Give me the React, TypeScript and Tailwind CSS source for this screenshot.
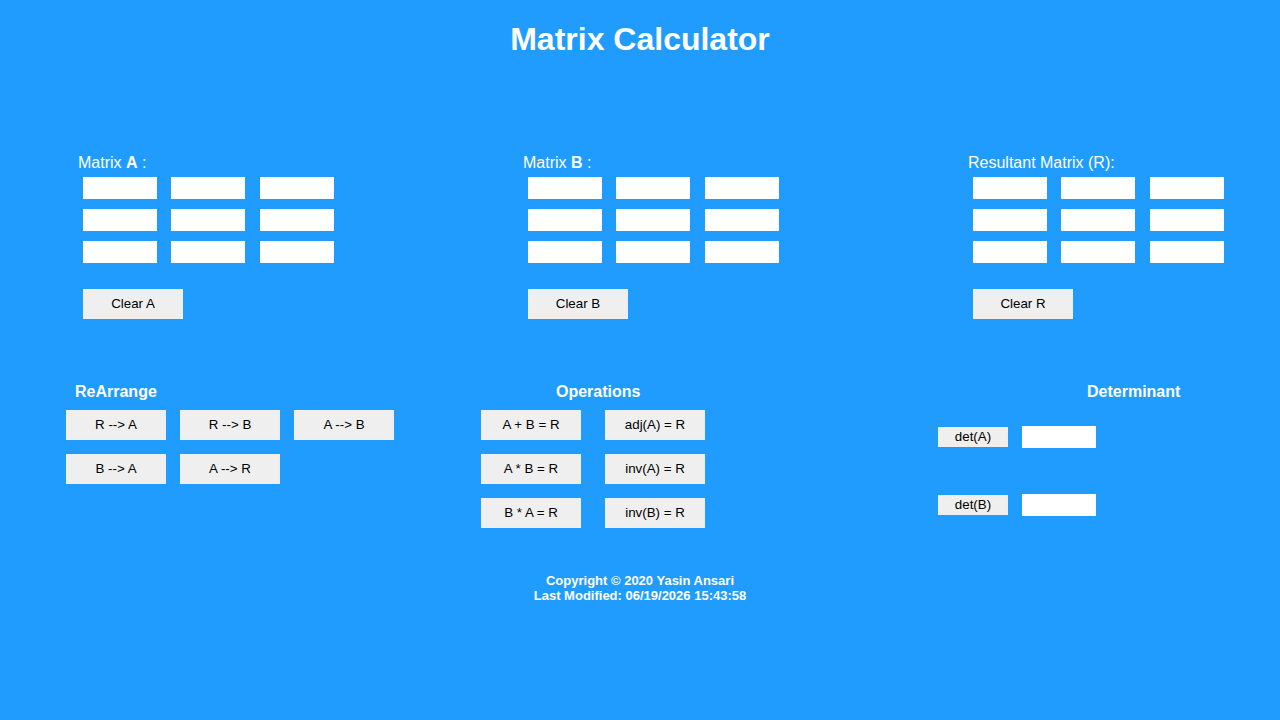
import React from "react";

const font = { fontFamily: '"Liberation Sans", Arial, sans-serif' };

function Cell() {
  return <input type="text" className="w-[74px] h-[22px] bg-white border-0 outline-none block" />;
}

function Btn({ label, w = "w-[100px]", h = "h-[30px]" }: { label: string; w?: string; h?: string }) {
  return (
    <button className={`${w} ${h} bg-[#efefef] text-black text-[13.333px] leading-none flex items-center justify-center`}>
      {label}
    </button>
  );
}

function MatrixBlock({ title, clear }: { title: React.ReactNode; clear: string }) {
  return (
    <div className="w-[445px] shrink-0 flex flex-col">
      <div className="mt-[2px] text-[16px] leading-[18px] text-white h-[18px]">{title}</div>
      <div className="ml-[5px] mt-[5px] flex flex-col gap-[10px]">
        {[0, 1, 2].map((r) => (
          <div key={r} className="flex">
            <Cell />
            <div className="ml-[14px]">
              <Cell />
            </div>
            <div className="ml-[15px]">
              <Cell />
            </div>
          </div>
        ))}
      </div>
      <div className="ml-[5px] mt-[26px]">
        <Btn label={clear} />
      </div>
    </div>
  );
}

export default function App() {
  return (
    <div className="min-h-[720px] w-full overflow-hidden bg-[#209cff] text-white" style={font}>
      <h1 className="pt-[21px] text-center text-[32px] leading-[37px] font-bold">Matrix Calculator</h1>

      <div className="mt-[94px] pl-[78px] flex">
        <MatrixBlock
          title={
            <>
              Matrix <b>A</b> :
            </>
          }
          clear="Clear A"
        />
        <MatrixBlock
          title={
            <>
              Matrix <b>B</b> :
            </>
          }
          clear="Clear B"
        />
        <MatrixBlock title="Resultant Matrix (R):" clear="Clear R" />
      </div>

      <div className="mt-[64px] pl-[66px] flex items-start">
        <div className="w-[328px] shrink-0 flex flex-col">
          <div className="pl-[9px] text-[16px] leading-[18px] font-bold">ReArrange</div>
          <div className="mt-[9px] flex flex-col gap-[14px]">
            <div className="flex gap-[14px]">
              <Btn label="R --> A" />
              <Btn label="R --> B" />
              <Btn label="A --> B" />
            </div>
            <div className="flex gap-[14px]">
              <Btn label="B --> A" />
              <Btn label="A --> R" />
            </div>
          </div>
        </div>

        <div className="ml-[87px] w-[224px] shrink-0 flex flex-col">
          <div className="pl-[75px] text-[16px] leading-[18px] font-bold">Operations</div>
          <div className="mt-[9px] grid grid-cols-[100px_100px] gap-x-[24px] gap-y-[14px]">
            <Btn label="A + B = R" />
            <Btn label="adj(A) = R" />
            <Btn label="A * B = R" />
            <Btn label="inv(A) = R" />
            <Btn label="B * A = R" />
            <Btn label="inv(B) = R" />
          </div>
        </div>

        <div className="ml-[233px] w-[260px] shrink-0 flex flex-col">
          <div className="pl-[149px] text-[16px] leading-[18px] font-bold">Determinant</div>
          <div className="mt-[25px] flex flex-col gap-[46px]">
            <div className="flex items-center gap-[14px]">
              <Btn label="det(A)" w="w-[70px]" h="h-[20px]" />
              <Cell />
            </div>
            <div className="flex items-center gap-[14px]">
              <Btn label="det(B)" w="w-[70px]" h="h-[20px]" />
              <Cell />
            </div>
          </div>
        </div>
      </div>

      <footer className="mt-[45px] text-center text-[13px] leading-[15px] font-bold">
        <div>Copyright © 2020 Yasin Ansari</div>
        <div>Last Modified: 06/19/2026 15:43:58</div>
      </footer>
    </div>
  );
}
